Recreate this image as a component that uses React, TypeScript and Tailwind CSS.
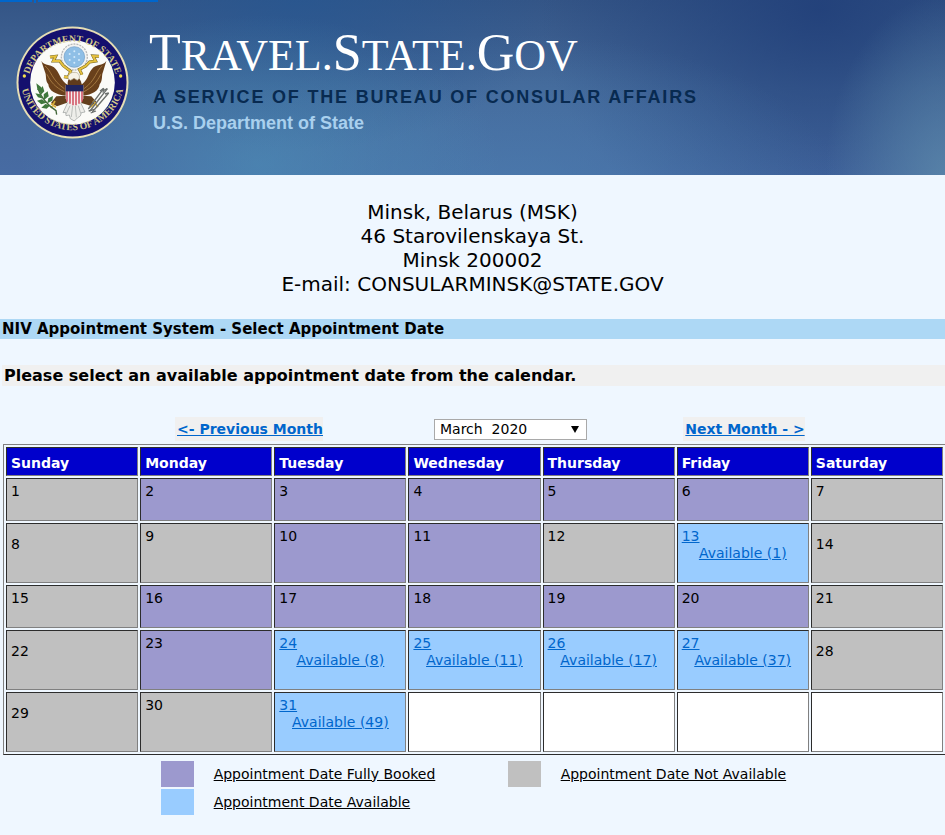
import { useState } from "react";
import { clsx } from "clsx";

type DayStatus = "unavailable" | "booked" | "available" | "empty";

type CalendarDay = {
  day?: number;
  status: DayStatus;
  slots?: number;
};

const weekdays = ["Sunday", "Monday", "Tuesday", "Wednesday", "Thursday", "Friday", "Saturday"];

const months = ["March\u00a0 2020", "April\u00a0 2020", "May\u00a0 2020"];

const openSlots: Record<number, number> = { 13: 1, 24: 8, 25: 11, 26: 17, 27: 37, 31: 49 };
const closedDays = [1, 7, 8, 9, 12, 14, 15, 21, 22, 28, 29, 30];

const statusColors: Record<DayStatus, string> = {
  unavailable: "bg-[#c0c0c0]",
  booked: "bg-[#9c99ce]",
  available: "bg-[#99ccff]",
  empty: "bg-white"
};

function getDay(day: number): CalendarDay {
  if (day > 31) return { status: "empty" };
  if (openSlots[day]) return { day, status: "available", slots: openSlots[day] };
  if (closedDays.includes(day)) return { day, status: "unavailable" };
  return { day, status: "booked" };
}

const weeks = [0, 1, 2, 3, 4].map((week) => weekdays.map((_, i) => getDay(week * 7 + i + 1)));

function Seal() {
  return (
    <svg viewBox="0 0 339 339" className="size-[113px] shrink-0" role="img" aria-label="Department of State seal">
      <defs>
        <path id="seal-top" d="M36 170A134 134 0 0 1 303 170" />
        <path id="seal-bottom" d="M15 170A155 155 0 0 0 324 170" />
      </defs>
      <circle cx="169.5" cy="169.5" r="168" fill="#e6deb4" />
      <circle cx="169.5" cy="169.5" r="162" fill="#14106e" />
      <circle cx="169.5" cy="169.5" r="127" fill="#fbfbf8" />
      <g fill="#d3c887" fontFamily="Liberation Serif, serif" fontWeight="700" fontSize="29" textAnchor="middle">
        <text>
          <textPath href="#seal-top" startOffset="50%">DEPARTMENT OF STATE</textPath>
        </text>
        <text>
          <textPath href="#seal-bottom" startOffset="50%">UNITED STATES OF AMERICA</textPath>
        </text>
      </g>
      <circle cx="25" cy="150" r="5" fill="#f0dc50" />
      <circle cx="314" cy="150" r="5" fill="#f0dc50" />
      {/* glory */}
      <circle cx="175" cy="93" r="39" fill="#f4f4f2" stroke="#b9b9b9" strokeWidth="4" strokeDasharray="6 3" />
      <circle cx="175" cy="93" r="31" fill="#8fbfe6" stroke="#6d9cc6" strokeWidth="2" />
      <g fill="#d3eafb">
        <circle cx="175" cy="76" r="3" />
        <circle cx="161" cy="84" r="3" />
        <circle cx="189" cy="84" r="3" />
        <circle cx="175" cy="93" r="3" />
        <circle cx="161" cy="102" r="3" />
        <circle cx="189" cy="102" r="3" />
        <circle cx="175" cy="110" r="3" />
      </g>
      {/* wings */}
      <path d="M76 105C86 121 106 113 119 129C133 145 134 166 158 178L151 209C119 207 98 194 97 175C87 163 92 148 87 138Z" fill="#69401b" />
      <path d="M271 105C260 121 240 113 228 129C214 145 216 166 192 178L199 209C230 207 249 194 251 175C261 163 256 148 261 138Z" fill="#69401b" />
      <path d="M87 120C105 132 108 164 145 188M93 145C104 168 118 184 145 197M259 120C241 132 239 164 204 188M254 145C243 168 229 184 204 197" fill="none" stroke="#a37840" strokeWidth="3" />
      <path d="M155 170C157 157 163 151 174 151C187 151 195 160 198 180L194 193H155Z" fill="#603b1b" />
      {/* ribbon */}
      <path d="M102 93L119 91L112 105L131 105L142 119L164 136L157 154L144 152M249 91L231 90L239 105L221 108L209 120L190 130L198 146" fill="none" stroke="#776825" strokeWidth="9" />
      <path d="M102 93L119 91L112 105L131 105L142 119L164 136L157 154L144 152M249 91L231 90L239 105L221 108L209 120L190 130L198 146" fill="none" stroke="#e5c13e" strokeWidth="6" />
      <path d="M157 159C154 148 163 139 174 139C185 138 192 145 190 157L184 163L174 157L164 163Z" fill="#f6f3e8" stroke="#aaa285" strokeWidth="2" />
      {/* legs */}
      <path d="M150 209L121 211L105 231L123 241L153 230ZM199 209L226 211L242 229L226 240L196 231Z" fill="#63401d" />
      <path d="M105 233L120 244M117 225L105 246M241 231L222 244M231 224L246 243" stroke="#d6ac38" strokeWidth="5" />
      {/* tail */}
      <path d="M155 230L141 260L149 259L150 269L160 267L163 278L175 285L184 276L193 270L196 260L207 258L194 230Z" fill="#eeeeea" stroke="#969a98" strokeWidth="2" />
      <path d="M162 239L151 263M170 239L166 273M178 239L181 274M187 239L194 262" stroke="#a3a7a4" strokeWidth="2" />
      {/* shield */}
      <path d="M149 177H202V217Q200 231 175 240Q151 231 149 217Z" fill="#f5efef" />
      <path d="M153 195V227M162 195V233M171 195V238M180 195V238M189 195V233M198 195V227" stroke="#c9384a" strokeWidth="4" />
      <path d="M149 177H202V196H149Z" fill="#20245f" />
      {/* olive branch */}
      <path d="M66 188Q80 227 120 254L122 266" fill="none" stroke="#426638" strokeWidth="4" />
      <g fill="#3f783c">
        <path d="M61 172L76 184L75 200L64 190Z" />
        <path d="M80 180L85 196L74 207L72 191Z" />
        <path d="M58 202L73 205L81 218L66 214Z" />
        <path d="M95 196L98 211L84 222L83 205Z" />
        <path d="M63 224L78 220L92 230L76 235Z" />
        <path d="M111 210L109 224L94 232L97 217Z" />
        <path d="M76 245L88 234L103 238L92 248Z" />
      </g>
      {/* arrows */}
      <g stroke="#6b6f6c" strokeWidth="4" fill="none">
        <path d="M222 255L274 188M229 258L278 201M217 249L263 187" />
        <path d="M263 187L252 195M263 187L261 200M274 188L264 193M278 201L267 204" />
        <path d="M218 255L235 250M224 261L240 255" />
      </g>
    </svg>
  );
}

function Banner() {
  return (
    <header className="relative flex h-[175px] items-start bg-[radial-gradient(ellipse_240px_150px_at_260px_165px,#4d90b899,transparent),radial-gradient(ellipse_260px_150px_at_300px_0px,#265792b3,transparent),radial-gradient(ellipse_320px_150px_at_520px_185px,#4c80b099,transparent),radial-gradient(ellipse_120px_180px_at_100%_100%,#5c88aacc,transparent),radial-gradient(ellipse_280px_240px_at_820px_10px,#1f3d78cc,transparent),linear-gradient(to_bottom,#345586,#436798_50%,#476ba3)] pt-[26px] pl-4">
      <a href="#calendar" aria-label="Skip to calendar" className="absolute top-0 left-0 flex gap-0.5">
        <span className="h-0.5 w-8 bg-[#0066cc]" />
        <span className="h-[3px] w-0.5 bg-[#0066cc]" />
        <span className="h-0.5 w-[120px] bg-[#0066cc]" />
      </a>
      <Seal />
      <div className="pl-6 whitespace-nowrap">
        <h1 className="-ml-1 h-[58px] font-['Liberation_Serif',serif] text-[44px] leading-[54px] text-white">
          <span className="text-[52px]">T</span>RAVEL.<span className="text-[52px]">S</span>TATE.<span className="text-[52px]">G</span>OV
        </h1>
        <p className="font-['Liberation_Sans',sans-serif] text-lg leading-[26px] font-bold tracking-widest text-[#082a50]">
          A SERVICE OF THE BUREAU OF CONSULAR AFFAIRS
        </p>
        <p className="font-['Liberation_Sans',sans-serif] text-lg leading-[26px] font-bold text-[#a9d0ee]">U.S. Department of State</p>
      </div>
    </header>
  );
}

function DayCell({ day, tall, edge }: { day: CalendarDay; tall: boolean; edge: boolean }) {
  return (
    <td
      className={clsx(
        "border border-t-[#2c2c2c] border-r-[#808080] border-b-[#808080] border-l-[#2c2c2c] px-1 align-top",
        tall && edge ? "pt-3" : "pt-1",
        statusColors[day.status]
      )}
    >
      {day.slots ? (
        <a href={`#day-${day.day}`} className="block text-[#0066cc] underline">
          {day.day}
          <span className="block text-center underline">Available ({day.slots})</span>
        </a>
      ) : (
        day.day
      )}
    </td>
  );
}

function LegendItem({ status, label }: { status: DayStatus; label: string }) {
  return (
    <li className="flex items-center gap-5">
      <span className={clsx("h-[26px] w-[33px]", statusColors[status])} />
      <span className="underline">{label}</span>
    </li>
  );
}

export default function App() {
  const [month, setMonth] = useState(months[0]);

  return (
    <div className="min-h-screen overflow-x-hidden bg-[#eff7ff] font-['DejaVu_Sans',Verdana,sans-serif] text-sm leading-[17px] text-black">
      <Banner />

      <address className="pt-[25px] text-center text-xl leading-6 not-italic">
        Minsk, Belarus (MSK)
        <br />
        46 Starovilenskaya St.
        <br />
        Minsk 200002
        <br />
        E-mail: CONSULARMINSK@STATE.GOV
      </address>

      <h2 className="mt-[23px] bg-[#add8f5] pl-0.5 text-[15px] leading-5 font-bold">NIV Appointment System - Select Appointment Date</h2>

      <p className="mt-[26px] ml-0.5 bg-[#f0f0f0] pl-0.5 text-base leading-[21px] font-bold">
        Please select an available appointment date from the calendar.
      </p>

      <nav className="mt-[31px] grid grid-cols-[118fr_262fr_261fr_206fr_98fr] items-center">
        <a href="#previous" className="col-start-2 justify-self-center bg-[#f0f0f0] pl-0.5 leading-6 font-bold whitespace-nowrap text-[#0066cc] underline">
          &lt;- Previous Month
        </a>
        <div className="relative h-[21px] w-[153px] justify-self-center">
          <select
            aria-label="Month"
            value={month}
            onChange={(e) => setMonth(e.target.value)}
            className="block h-full w-full appearance-none border border-[#a9a9a9] bg-white pl-[5px] leading-[19px]"
          >
            {months.map((m) => (
              <option key={m}>{m}</option>
            ))}
          </select>
          <svg viewBox="0 0 8 7" className="pointer-events-none absolute top-[7px] right-2 h-[7px] w-2">
            <path d="M0 0H8L4 7Z" fill="#000" />
          </svg>
        </div>
        <a href="#next" className="justify-self-center bg-[#f0f0f0] pl-0.5 leading-6 font-bold whitespace-nowrap text-[#0066cc] underline">
          Next Month - &gt;
        </a>
      </nav>

      <table
        id="calendar"
        className="mt-[3px] ml-[3px] w-[calc(100%-2px)] table-fixed border-separate border-spacing-[2px] border border-t-[#808080] border-r-[#2c2c2c] border-b-[#2c2c2c] border-l-[#808080]"
      >
        <thead>
          <tr className="h-[29px]">
            {weekdays.map((name) => (
              <th
                key={name}
                scope="col"
                className="border border-t-[#2c2c2c] border-r-[#808080] border-b-[#808080] border-l-[#2c2c2c] bg-[#0000cc] px-1 pt-1 text-left font-bold text-white"
              >
                {name}
              </th>
            ))}
          </tr>
        </thead>
        <tbody>
          {weeks.map((week, index) => {
            const tall = week.some((day) => day.slots);
            return (
              <tr key={index} className={tall ? "h-[60px]" : "h-[43px]"}>
                {week.map((day, i) => (
                  <DayCell key={i} day={day} tall={tall} edge={i === 0 || i === 6} />
                ))}
              </tr>
            );
          })}
        </tbody>
      </table>

      <ul className="mt-1.5 grid grid-cols-[347px_auto] gap-y-0.5 pb-5 pl-[17%]">
        <LegendItem status="booked" label="Appointment Date Fully Booked" />
        <LegendItem status="unavailable" label="Appointment Date Not Available" />
        <LegendItem status="available" label="Appointment Date Available" />
      </ul>
    </div>
  );
}
